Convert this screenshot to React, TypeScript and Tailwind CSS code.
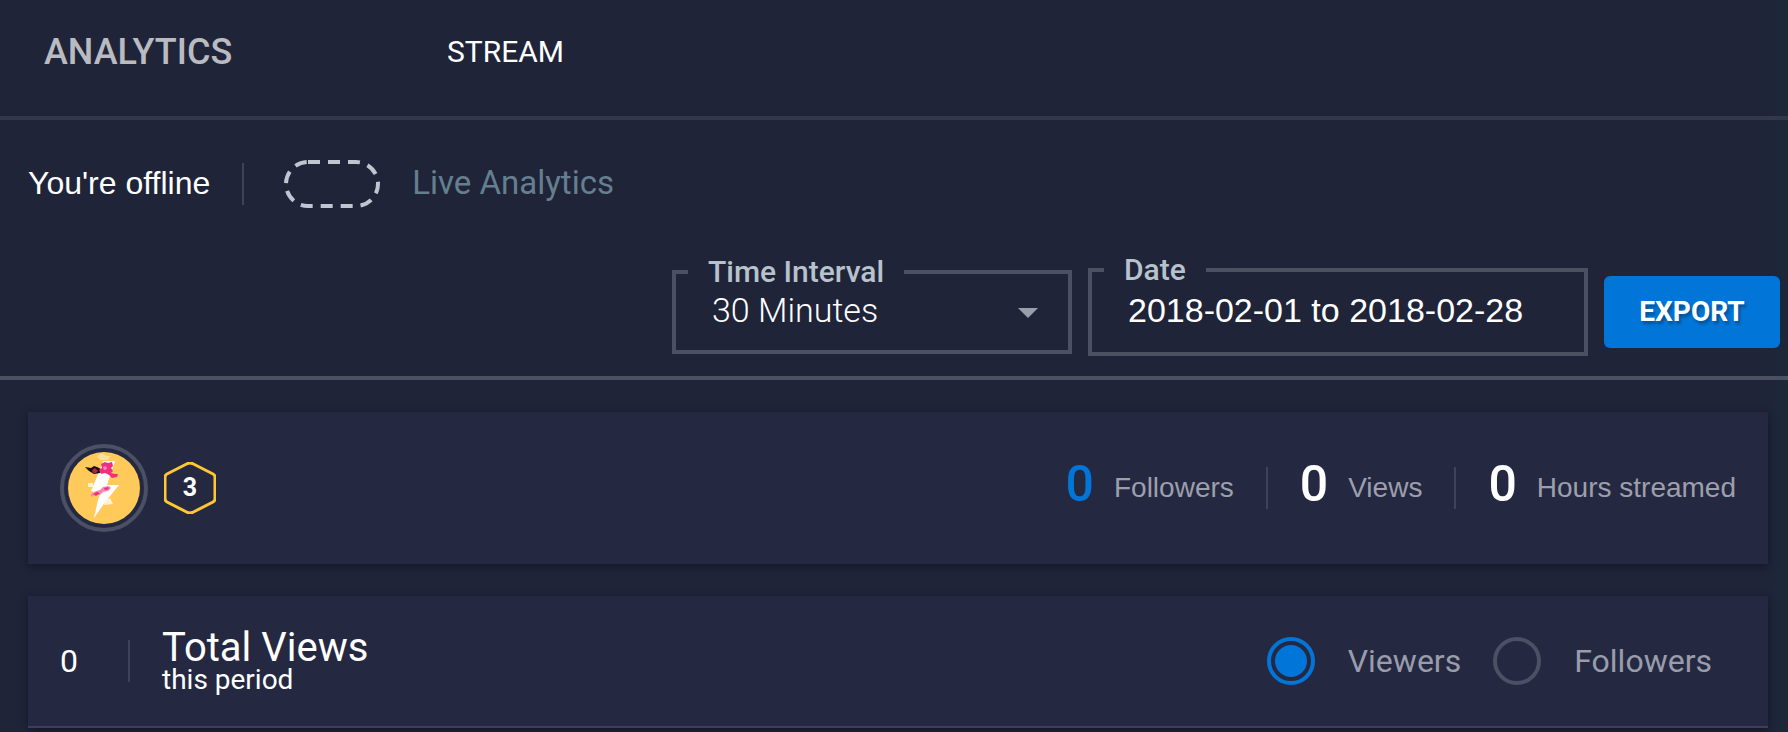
import { useState } from "react";
import type { ReactNode } from "react";

const techFont = "font-[Roboto,sans-serif]";
const plainFont = "font-['Liberation_Sans',Arial,sans-serif]";

function Divider() {
  return <span aria-hidden="true" className="h-[42px] w-[2px] shrink-0 bg-[#3f4359]" />;
}

function Stat({ value, label, accent = false }: { value: string; label: string; accent?: boolean }) {
  return (
    <div className="flex items-center gap-5">
      <strong
        className={
          accent
            ? "pb-2 font-[Roboto,sans-serif] text-[50px] leading-[56px] font-medium text-[#0275d8]"
            : "pb-2 font-[Roboto,sans-serif] text-[50px] leading-[56px] font-medium text-white"
        }
      >
        {value}
      </strong>
      <span className="text-[28px] leading-8 text-[#9c9fac]">{label}</span>
    </div>
  );
}

function Avatar() {
  return (
    <svg viewBox="0 0 88 88" className="size-[88px]" role="img" aria-label="Avatar">
      <circle cx="44" cy="44" r="42" fill="none" stroke="#4b5065" strokeWidth="4" />
      <circle cx="44" cy="44" r="36" fill="#ffca59" />
      <path d="M37 12l5-3 4 3 4 0-2 4-8 0z" fill="#ffdf9c" />
      <path d="M28 39h5v4h-5zM45 56l5-2 3 6-9 1z" fill="#fff1d2" />
      <path d="M43 17H55L47 41H59L46 57L34 74L38 56L40 50L31 47L39 28Z" fill="#fff" />
      <path d="M25 23l6 1 3-2 3 1 4 2-1 4-6 1-5-3z" fill="#180b16" />
      <path d="M32 26l3-2 3 3-2 2-3 0z" fill="#b0243f" />
      <path d="M41 20l4-2 3 1 4-1 1 4-2 2 2 3-2 2 4 1 3 0-1 3-5 1-3-3-4-2-4 1-2-4 3-2z" fill="#f02f80" />
      <path d="M43 23l3-1 1 3-3 1z" fill="#ff8fb9" />
      <path d="M31 50l5-3 4-1 3-3 6-1 2 2-3 3-5 1-3 3-5 0-4 2z" fill="#f58bac" />
      <path d="M33 50l4-2 3 1-4 3zM44 44l4-1 1 2-4 1z" fill="#ee2f74" />
    </svg>
  );
}

function LevelBadge({ level }: { level: number }) {
  return (
    <svg viewBox="0 0 52 52" className="size-[52px]" role="img" aria-label="Level">
      <path
        d="M23.500 1.500Q26 .500 28.500 1.500L49 12Q51 13 51 15.500V36.500Q51 39 49 40L28.500 50.500Q26 51.500 23.500 50.500L3 40Q1 39 1 36.500V15.500Q1 13 3 12Z"
        fill="none"
        stroke="#ffc832"
        strokeWidth="3"
      />
      <text x="26" y="34" textAnchor="middle" fill="#fff" fontSize="25" fontWeight="700" fontFamily="Roboto, sans-serif">
        {level}
      </text>
    </svg>
  );
}

function Radio({ label, checked, onSelect }: { label: string; checked: boolean; onSelect: () => void }) {
  return (
    <label className="flex cursor-pointer items-center gap-[33px]">
      <input
        type="radio"
        name="series"
        checked={checked}
        onChange={onSelect}
        className="m-0 size-12 shrink-0 appearance-none rounded-full border-4 border-[#4b5065] bg-clip-content p-1 checked:border-[#0275d8] checked:bg-[#0275d8]"
      />
      <span className="text-[32px] leading-10 text-[#999dab]">{label}</span>
    </label>
  );
}

function Card({ children }: { children: ReactNode }) {
  return <section className="bg-[#252841] shadow-[0_2px_8px_rgba(0,0,0,0.4)]">{children}</section>;
}

export default function App() {
  const [series, setSeries] = useState("viewers");
  return (
    <div
      className={`min-h-screen overflow-hidden bg-[#1f2439] bg-[linear-gradient(to_left,#1d273a,#1f2439_28px)] text-white ${plainFont}`}
    >
      <header className={`flex h-[120px] items-center border-b-4 border-[#32374c] pb-3 pl-11 ${techFont}`}>
        <h1 className="w-[403px] text-[36px] leading-10 font-medium text-[#b9bbc1]">ANALYTICS</h1>
        <a href="#stream" className="text-[30px] leading-10">
          STREAM
        </a>
      </header>

      <div className="flex h-32 items-center pl-7">
        <span className="pb-[2px] text-[32px] leading-10">You're offline</span>
        <span className="w-8" />
        <Divider />
        <button type="button" aria-label="Toggle live analytics" className="mr-8 ml-10 flex h-12 w-24">
          <svg viewBox="0 0 96 48" className="h-12 w-24">
            <rect
              x="2"
              y="2"
              width="92"
              height="44"
              rx="22"
              fill="none"
              stroke="#bec6d2"
              strokeWidth="4"
              strokeDasharray="12 8"
            />
          </svg>
        </button>
        <span className={`pb-[2px] text-[33px] leading-10 text-[#657f8f] ${techFont}`}>Live Analytics</span>
      </div>

      <div className="flex h-[132px] items-center justify-end gap-4 border-b-4 border-[#4b5063] pr-2">
        <fieldset className="relative mb-[14px] h-[98px] w-[400px] border-4 border-[#4b5063] px-9">
          <legend className={`-ml-6 px-5 text-[30px] leading-8 font-medium text-[#b8c2cc] ${techFont}`}>
            <label htmlFor="interval">Time Interval</label>
          </legend>
          <select
            id="interval"
            className={`w-full appearance-none bg-transparent pt-[2px] text-[34px] leading-10 font-light text-white ${techFont}`}
          >
            <option>30 Minutes</option>
            <option>60 Minutes</option>
          </select>
          <svg
            viewBox="0 0 20 10"
            className="pointer-events-none absolute top-5 right-[30px] h-[10px] w-5"
            aria-hidden="true"
          >
            <path d="M0 0h20L10 10z" fill="#9a9eab" />
          </svg>
        </fieldset>
        <fieldset className="mb-[14px] h-[102px] w-[500px] border-4 border-[#4b5063] px-9">
          <legend className={`-ml-6 px-5 text-[30px] leading-8 font-medium text-[#b8c2cc] ${techFont}`}>
            <label htmlFor="date">Date</label>
          </legend>
          <input
            id="date"
            type="text"
            defaultValue="2018-02-01 to 2018-02-28"
            className="w-full bg-transparent pt-1 text-[34px] leading-10 text-white"
          />
        </fieldset>
        <button
          type="button"
          className={`h-[72px] w-44 rounded-md bg-[#0275d8] text-[28px] leading-8 font-bold [text-shadow:2px_3px_3px_rgba(0,0,0,0.3)] ${techFont}`}
        >
          EXPORT
        </button>
      </div>

      <main className="flex flex-col gap-8 pt-8 pr-5 pl-7">
        <Card>
          <div className="flex h-[152px] items-center justify-between px-8">
            <div className="flex items-center gap-4">
              <Avatar />
              <LevelBadge level={3} />
            </div>
            <div className="flex items-center gap-8">
              <Stat value="0" label="Followers" accent />
              <Divider />
              <Stat value="0" label="Views" />
              <Divider />
              <Stat value="0" label="Hours streamed" />
            </div>
          </div>
        </Card>

        <Card>
          <div className={`flex h-[132px] items-center border-b-2 border-[#3b3f5a] px-8 ${techFont}`}>
            <span className="w-[68px] text-[32px] leading-10">0</span>
            <Divider />
            <h2 className="ml-8 flex grow flex-col pb-[2px] font-normal">
              <span className="text-[40px] leading-10">Total Views</span>
              <small className="text-[28px] leading-6">this period</small>
            </h2>
            <div className="flex items-center gap-8 pr-6">
              <Radio label="Viewers" checked={series === "viewers"} onSelect={() => setSeries("viewers")} />
              <Radio label="Followers" checked={series === "followers"} onSelect={() => setSeries("followers")} />
            </div>
          </div>
        </Card>
      </main>
    </div>
  );
}
